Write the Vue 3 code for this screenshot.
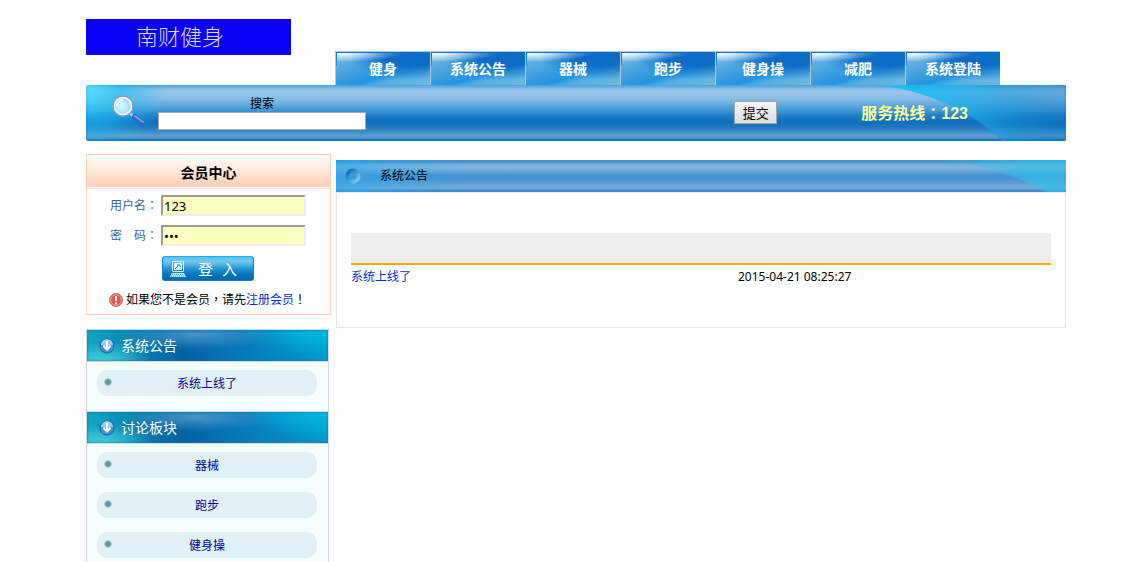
<script setup>
import { ref } from 'vue'

const navItems = ['健身', '系统公告', '器械', '跑步', '健身操', '减肥', '系统登陆']
const panels = [
  { title: '系统公告', items: ['系统上线了'] },
  { title: '讨论板块', items: ['器械', '跑步', '健身操'] },
]
const notices = [{ title: '系统上线了', time: '2015-04-21 08:25:27' }]

const keyword = ref('')
const username = ref('123')
const password = ref('123')
</script>

<template>
  <div class="page">
    <header class="header">
      <a class="logo" href="#">南财健身</a>
      <nav class="nav">
        <a v-for="item in navItems" :key="item" class="tab" href="#">{{ item }}</a>
      </nav>
    </header>

    <form class="search" @submit.prevent>
      <svg class="swoosh" width="190" height="56" viewBox="0 0 190 56" aria-hidden="true">
        <defs>
          <linearGradient id="barX" x1="0" x2="1" y1="0" y2="0">
            <stop offset="0" stop-color="#16c4fa" />
            <stop offset=".5" stop-color="#18aae8" stop-opacity=".7" />
            <stop offset="1" stop-color="#0a72bc" stop-opacity=".35" />
          </linearGradient>
        </defs>
        <path d="M0 0C50 5 96 26 126 56H190V0Z" fill="url(#barX)" />
      </svg>
      <svg class="lens" width="36" height="36" viewBox="0 0 36 36" aria-hidden="true">
        <defs>
          <radialGradient id="glass" cx=".45" cy=".5" r=".6">
            <stop offset="0" stop-color="#e2f8ff" />
            <stop offset=".6" stop-color="#a6e2fb" />
            <stop offset="1" stop-color="#e4f8ff" />
          </radialGradient>
        </defs>
        <path d="M18 19L23 24" stroke="#b9c9d8" stroke-width="3" />
        <path d="M23 23L31 30" stroke="#2f6bc4" stroke-width="6" stroke-linecap="round" />
        <path d="M23 22L31 28" stroke="#6fa6e6" stroke-width="2" stroke-linecap="round" />
        <circle cx="11" cy="12" r="10" fill="url(#glass)" stroke="#8a9ab8" stroke-width="1.500" />
        <circle cx="11" cy="12" r="8.500" fill="none" stroke="#eef7fd" stroke-width="1.500" />
        <path d="M5 12Q6 7 11 6" fill="none" stroke="#fff" stroke-width="2" />
      </svg>
      <div class="field">
        <label for="keyword">搜索</label>
        <input id="keyword" v-model="keyword" type="text" />
      </div>
      <button class="submit" type="submit">提交</button>
      <strong class="hotline">服务热线<span class="punct">：</span>123</strong>
    </form>

    <div class="columns">
      <aside class="side">
        <form class="member" @submit.prevent>
          <h2>会员中心</h2>
          <div class="row">
            <label for="user">用户名<span class="punct">：</span></label>
            <input id="user" v-model="username" type="text" />
          </div>
          <div class="row">
            <label for="pass">密　码<span class="punct">：</span></label>
            <input id="pass" v-model="password" type="password" />
          </div>
          <button class="login" type="submit">
            <svg width="18" height="18" viewBox="0 0 18 18" aria-hidden="true">
              <path d="M3.500 1.500H14.500V11.500H3.500Z" fill="none" stroke="#d3f3ff" />
              <path d="M5 3H13V10H5Z" fill="#d3f3ff" />
              <path d="M6 9L9 6M8 5H11V7" fill="none" stroke="#1682c4" />
              <path d="M3 13H15L17 17H1Z" fill="#c3edff" />
              <path d="M3 14.500H15M2 16H16" stroke="#1580c2" stroke-width=".8" stroke-dasharray="1 1" />
            </svg>
            <span>登</span><span>入</span>
          </button>
          <p class="hint">
            <svg width="14" height="14" viewBox="0 0 14 14" aria-hidden="true">
              <circle cx="7" cy="7" r="6.500" fill="#e5584b" stroke="#cf6a60" />
              <circle cx="7" cy="7" r="5.300" fill="none" stroke="#f3a59b" />
              <path d="M7 3V8M7 9.500V11.300" stroke="#fff" stroke-width="2" />
            </svg>
            <span>如果您不是会员<span class="punct">，</span>请先<a href="#">注册会员</a><span class="punct">！</span></span>
          </p>
        </form>

        <div class="panels">
          <section v-for="panel in panels" :key="panel.title" class="panel">
            <h2>
              <svg width="16" height="16" viewBox="0 0 16 16" aria-hidden="true">
                <circle cx="8" cy="8" r="7" fill="#438fd6" stroke="#215b9e" />
                <path d="M2 7A6 6 0 0 1 14 7Q8 9 2 7Z" fill="#9bcdf3" />
                <path d="M8 3V11M4.500 8L8 11.500L11.500 8" fill="none" stroke="#fff" stroke-width="2" />
              </svg>
              {{ panel.title }}
            </h2>
            <ul>
              <li v-for="item in panel.items" :key="item"><a href="#">{{ item }}</a></li>
            </ul>
          </section>
        </div>
      </aside>

      <main class="main">
        <h1>
          <svg class="swoosh" width="126" height="32" viewBox="0 0 126 32" aria-hidden="true">
            <defs>
              <linearGradient id="headX" x1="0" x2="1" y1="0" y2="0">
                <stop offset="0" stop-color="#30c0e4" stop-opacity=".15" />
                <stop offset=".7" stop-color="#30c0e4" stop-opacity=".65" />
              </linearGradient>
            </defs>
            <path d="M0 0Q60 6 106 32H126V0Z" fill="url(#headX)" />
          </svg>
          <svg width="16" height="16" viewBox="0 0 16 16" aria-hidden="true">
            <defs>
              <linearGradient id="ringG" x1="0" y1="0" x2="1" y2="1">
                <stop offset="0" stop-color="#0a66a8" />
                <stop offset="1" stop-color="#7dd3ff" />
              </linearGradient>
            </defs>
            <circle cx="8" cy="8" r="5.500" fill="#3e9bd8" stroke="url(#ringG)" stroke-width="4" />
          </svg>
          系统公告
        </h1>
        <div class="content">
          <table>
            <thead>
              <tr><th aria-label="标题"></th><th aria-label="时间"></th></tr>
            </thead>
            <tbody>
              <tr v-for="n in notices" :key="n.title">
                <td><a href="#">{{ n.title }}</a></td>
                <td>{{ n.time }}</td>
              </tr>
            </tbody>
          </table>
        </div>
      </main>
    </div>
  </div>
</template>

<style>
body {
  margin: 0;
  background: #fff;
}
</style>

<style scoped>
* {
  box-sizing: border-box;
}
.page {
  padding: 0 78px 0 86px;
  font: 12px/18px "Noto Sans", "Noto Sans CJK SC", sans-serif;
  color: #000;
}
h1,
h2,
p,
ul {
  margin: 0;
  padding: 0;
}
a {
  text-decoration: none;
}
.punct {
  font-family: "Noto Sans CJK TC", sans-serif;
}
.header {
  display: flex;
  align-items: flex-end;
  gap: 44px;
  padding-top: 19px;
}
.logo {
  align-self: flex-start;
  flex: none;
  width: 205px;
  height: 36px;
  margin-bottom: 30px;
  padding-left: 50px;
  background: #0a00f5;
  color: #dcdcff;
  font-family: "Noto Sans CJK SC", sans-serif;
  font-size: 22px;
  font-weight: 300;
  line-height: 32px;
}
.nav {
  display: flex;
}
.tab {
  width: 95px;
  height: 34px;
  border-top: 1px solid #a9c9e2;
  border-left: 1px solid #a9c9e2;
  background:
    linear-gradient(#0f6fc4, #0f6fc4) 0 0 / 100% 1px no-repeat,
    linear-gradient(#0f6fc4, #2f8fd8) 0 0 / 1px 14px no-repeat,
    radial-gradient(ellipse 65px 9px at 2px 1px, #fff, #fff0) no-repeat,
    radial-gradient(ellipse 62px 26px at 74px 2px, #0d6cc5 45%, #1c80d399 75%, #2b94e000) no-repeat,
    linear-gradient(163deg, #7fbfe8, #4aa3dd 35%, #2395e2 62%, #54b0e0 74%, #72b9dc);
  color: #fff;
  font-size: 14px;
  font-weight: 700;
  line-height: 34px;
  text-align: center;
}
.search {
  position: relative;
  display: flex;
  height: 56px;
  padding-left: 26px;
  border-radius: 2px;
  background:
    radial-gradient(ellipse 80px 70px at 0 0, #58e0ff, #20c0f4aa 45%, #20b0f000),
    linear-gradient(#62a8db 0, #9ac7e9 12%, #86bce5 25%, #4b9fdb 42%, #1c7dc9 56%, #0b6fbc 66%, #2179bf 76%, #5a9fd2 90%, #4d95cb 95%, #1673b9 98%);
  box-shadow: inset 0 0 3px #0a73bd88;
}
.swoosh {
  position: absolute;
  top: 0;
  right: 0;
}
.lens {
  position: relative;
  flex: none;
  margin-top: 9px;
}
.field {
  width: 208px;
  margin: 11px 0 0 10px;
  text-align: center;
}
.field label {
  display: block;
  line-height: 16px;
}
.field input {
  display: block;
  width: 100%;
  height: 18px;
  border: 1px solid #a9a9a9;
  background: #fff;
}
.submit {
  position: relative;
  width: 43px;
  height: 23px;
  margin: 16px 0 0 auto;
  padding: 0;
  border: 1px solid #a5a5a5;
  background: linear-gradient(#f6f6f6, #dedede);
  font: 13px/20px "Noto Sans CJK SC", sans-serif;
}
.hotline {
  position: relative;
  margin: 15px 98px 0 84px;
  color: #ff9;
  font: 700 16px/24px "Liberation Sans", "Noto Sans CJK SC", sans-serif;
}
.columns {
  display: flex;
  align-items: flex-start;
  gap: 5px;
  padding-top: 13px;
}
.side {
  flex: none;
  width: 245px;
}
.member {
  display: flex;
  flex-direction: column;
  border: 1px solid #ffcdb4;
  padding-bottom: 5px;
}
.member h2 {
  height: 34px;
  border-bottom: 1px solid #ffe0d2;
  background: linear-gradient(#fff, #ffd0b7 31px, #ffd0b7 32px, #fff 32px);
  font-size: 14px;
  line-height: 36px;
  text-align: center;
}
.row {
  display: flex;
  align-items: center;
  height: 21px;
  margin: 6px 0 3px 23px;
}
.row label {
  width: 51px;
  color: #336699;
}
.row input {
  width: 145px;
  height: 21px;
  padding: 0 1px;
  border: 2px solid;
  border-color: #9a9a9a #eee #eee #9a9a9a;
  background: #faffbd;
  font: 13px/16px "Noto Sans", sans-serif;
}
.login {
  display: flex;
  align-items: center;
  gap: 9px;
  width: 92px;
  height: 25px;
  margin: 7px 0 0 75px;
  padding: 0 0 0 6px;
  border: 1px solid #0684cb;
  border-top-color: #19aee4;
  border-radius: 3px;
  background: linear-gradient(#5cc2ec, #74c8ee 20%, #1990d0 55%, #0470b8 80%, #0868ae);
  color: #fff;
  font: 15px/22px "Noto Sans CJK SC", sans-serif;
}
.login svg {
  margin-right: 2px;
}
.hint {
  display: flex;
  align-items: center;
  gap: 3px;
  margin: 9px 0 0 22px;
  white-space: nowrap;
}
.hint a,
.main a {
  color: #0033cc;
}
.panels {
  width: 243px;
  margin-top: 14px;
  border: solid #d3d9da;
  border-width: 0 1px;
  background: #f7fefe;
}
.panel h2 {
  display: flex;
  align-items: center;
  gap: 6px;
  height: 33px;
  padding: 0 12px;
  border-top: 1px solid #c8dce4;
  border-bottom: 1px solid #d3d9da;
  background:
    radial-gradient(ellipse 50px 20px at 15px 32px, #45d3df, #45d3df00),
    radial-gradient(ellipse 80px 14px at 110px 5px, #4795c7, #4795c700),
    radial-gradient(ellipse 90px 26px at 100% 0, #00bde0, #00bde000),
    linear-gradient(90deg, #12a8c0, #087fae 22%, #0262a2 40%, #0676b5 60%, #029bcf);
  box-shadow: inset 0 0 3px #0575ac;
  color: #fff;
  font-size: 14px;
  font-weight: 400;
}
.panel ul {
  display: grid;
  gap: 14px;
  padding: 8px 11px 15px 10px;
  list-style: none;
}
.panel:last-child ul {
  padding-bottom: 4px;
}
.panel li {
  height: 26px;
  border-radius: 10px;
  background: radial-gradient(circle at 11px 12px, #579bab 2px, #78aeba 3px, #e1f0f6 4px);
  line-height: 27px;
  text-align: center;
}
.panel li a {
  color: #000099;
}
.main {
  flex: 1;
  min-width: 0;
  padding-top: 6px;
}
.main h1 {
  position: relative;
  display: flex;
  align-items: center;
  gap: 19px;
  height: 32px;
  padding-left: 9px;
  background:
    linear-gradient(90deg, #2aaaf099, #2aaaf000 130px),
    linear-gradient(#3f8ecb 0, #4492cd 6%, #78afdb 14%, #80b4dc 24%, #4791cd 48%, #4a93cf 60%, #78addb 88%, #3f8ecb 95%);
  font-size: 12px;
  font-weight: 400;
  line-height: 20px;
}
.content {
  min-height: 136px;
  padding: 40px 14px 37px;
  border: 1px solid #e6e6e6;
}
table {
  width: 100%;
  border-collapse: separate;
  border-spacing: 0;
}
th {
  height: 32px;
  padding: 0;
  border-bottom: 2px solid #ffa800;
  background: #eee;
}
th:first-child {
  width: 55%;
}
td {
  height: 24px;
  padding: 0;
}
td + td {
  padding-left: 2px;
}
</style>
